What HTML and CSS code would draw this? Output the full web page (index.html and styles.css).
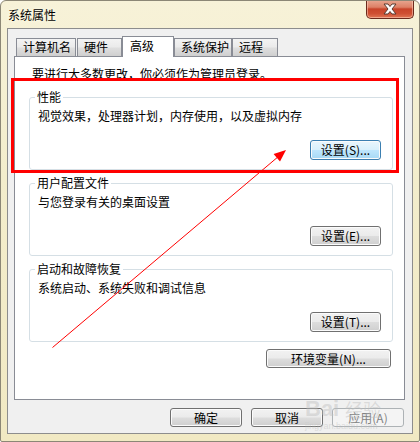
FILE: index.html
```html
<!DOCTYPE html>
<html lang="zh-CN">
<head>
<meta charset="utf-8">
<title>系统属性</title>
<link rel="stylesheet" href="styles.css">
</head>
<body>
<div class="window">
  <div class="titlebar">
    <span class="title">系统属性</span>
    <div class="close">
      <svg width="20" height="12" viewBox="0 0 20 12">
        <path d="M4 1 L8 1 L10 3.5 L12 1 L16 1 L12 6 L16 11 L12 11 L10 8.5 L8 11 L4 11 L8 6 Z" fill="#ffffff" stroke="#5a3a30" stroke-width="1"/>
      </svg>
    </div>
  </div>
  <div class="client">
    <div class="tabs">
      <div class="tab w60">计算机名</div>
      <div class="tab w45 gap1">硬件</div>
      <div class="tab tab-active w52">高级</div>
      <div class="tab w58">系统保护</div>
      <div class="tab w46">远程</div>
    </div>
    <div class="panel">
      <p class="intro">要进行大多数更改，你必须作为管理员登录。</p>
      <fieldset class="group">
        <legend>性能</legend>
        <p class="desc">视觉效果，处理器计划，内存使用，以及虚拟内存</p>
        <div class="group-actions"><button class="btn btn-hot">设置(S)...</button></div>
      </fieldset>
      <fieldset class="group">
        <legend>用户配置文件</legend>
        <p class="desc">与您登录有关的桌面设置</p>
        <div class="group-actions"><button class="btn">设置(E)...</button></div>
      </fieldset>
      <fieldset class="group">
        <legend>启动和故障恢复</legend>
        <p class="desc">系统启动、系统失败和调试信息</p>
        <div class="group-actions"><button class="btn">设置(T)...</button></div>
      </fieldset>
      <div class="env-row"><button class="btn btn-env">环境变量(N)...</button></div>
    </div>
    <div class="footer">
      <button class="btn btn-foot">确定</button>
      <button class="btn btn-foot">取消</button>
      <button class="btn btn-foot btn-disabled">应用(A)</button>
    </div>
  </div>

  <div class="highlight"></div>
  <svg class="arrow" width="420" height="442" viewBox="0 0 420 442">
    <line x1="52.5" y1="347.5" x2="279" y2="156" stroke="#ff0000" stroke-width="1"/>
    <polygon points="286,150 280,161.5 273.6,153.9" fill="#ff0000"/>
  </svg>
  <div class="watermark"><span class="wm-big">Bai</span><span class="wm-cn">经验</span><span class="wm-small">jingyan.baidu.com</span></div>
</div>
</body>
</html>
```

FILE: styles.css
```css
* { box-sizing: border-box; }

html, body {
  margin: 0;
  padding: 0;
  background: #ffffff;
}

body {
  font-family: "Noto Sans CJK SC", "Liberation Sans", sans-serif;
  font-size: 12px;
  line-height: 16px;
  color: #000;
}

.window {
  position: relative;
  width: 420px;
  height: 442px;
  background: linear-gradient(180deg, #f7f2d8 0%, #f3edcc 40%, #f1e9c3 100%);
  border: 1px solid #8c8776;
  border-radius: 6px 6px 2px 2px;
  overflow: hidden;
}

.titlebar {
  height: 27px;
  display: flex;
  align-items: flex-start;
  justify-content: space-between;
}

.title {
  margin: 6px 0 0 7px;
  font-size: 12px;
  line-height: 16px;
  color: #000;
  text-shadow: 0 0 6px #fffbe8, 0 0 3px #fffbe8;
}

.close {
  width: 48px;
  height: 19px;
  margin: -1px 5px 0 0;
  border: 1px solid #6b2a1d;
  border-top: none;
  border-radius: 0 0 5px 5px;
  background: linear-gradient(180deg, #e9a892 0%, #dd8066 40%, #c8442a 50%, #cf4f33 75%, #e07654 100%);
  box-shadow: inset 0 0 0 1px rgba(255, 210, 190, 0.55);
  display: flex;
  align-items: center;
  justify-content: center;
}

.client {
  margin: 0 6px;
  height: 406px;
  border: 1px solid #8d8d8d;
  background: #f0f0f0;
  display: flex;
  flex-direction: column;
}

.tabs {
  height: 27px;
  padding-left: 8px;
  display: flex;
  align-items: flex-end;
  position: relative;
  z-index: 1;
}

.tab {
  height: 18px;
  padding-left: 6px;
  border: 1px solid #898c95;
  border-bottom: none;
  background: linear-gradient(180deg, #f3f3f3 0%, #ebebeb 45%, #dedede 55%, #cfcfcf 100%);
  font-size: 12px;
  line-height: 16px;
  white-space: nowrap;
  color: #000;
}

.tab-active {
  height: 21px;
  margin-bottom: -1px;
  padding-left: 7px;
  padding-top: 1px;
  background: #ffffff;
}

.w60 { width: 60px; }
.w45 { width: 45px; }
.w52 { width: 52px; }
.w58 { width: 58px; }
.w46 { width: 46px; }
.gap1 { margin-left: 1px; }

.panel {
  margin-left: 6px;
  width: 391px;
  height: 344px;
  border: 1px solid #898c95;
  background: #ffffff;
  padding-top: 9px;
}

.intro {
  margin: 0 0 7px 17px;
  white-space: nowrap;
}

.group {
  margin: 0 0 5px 14px;
  width: 364px;
  min-width: 0;
  padding: 3px 11px 9px 8px;
  border: 1px solid #d5dfe5;
  border-radius: 3px;
}

.group legend {
  margin-left: -3px;
  padding: 0 2px;
  line-height: 16px;
  font-size: 12px;
}

.desc {
  margin: 0;
  white-space: nowrap;
}

.group-actions {
  margin-top: 16px;
  display: flex;
  justify-content: flex-end;
}

.btn {
  height: 20px;
  width: 71px;
  padding: 0;
  border: 1px solid #707070;
  border-radius: 3px;
  background: linear-gradient(180deg, #f2f2f2 0%, #ebebeb 48%, #dddddd 52%, #cfcfcf 100%);
  box-shadow: inset 0 0 0 1px #fbfbfb;
  font-family: "Noto Sans CJK SC", "Liberation Sans", sans-serif;
  font-size: 12px;
  line-height: 16px;
  color: #000;
  white-space: nowrap;
}

.btn-hot {
  border-color: #3c7fb1;
  background: linear-gradient(180deg, #eaf6fd 0%, #d9f0fc 48%, #bee6fd 52%, #a7d9f5 100%);
}

.env-row {
  margin: 7px 13px 0 0;
  display: flex;
  justify-content: flex-end;
}

.btn-env {
  width: 125px;
  height: 19px;
}

.footer {
  margin-top: 8px;
  padding-right: 8px;
  display: flex;
  justify-content: flex-end;
  gap: 9px;
}

.btn-foot {
  width: 72px;
  height: 19px;
}

.btn-disabled {
  border-color: #adb2b5;
  background: #f4f4f4;
  box-shadow: none;
  color: #838383;
}

.highlight {
  position: absolute;
  left: 10px;
  top: 77px;
  width: 388px;
  height: 95px;
  border: 3px solid #ff0000;
  pointer-events: none;
}

.arrow {
  position: absolute;
  left: -1px;
  top: -1px;
  pointer-events: none;
}

.watermark {
  position: absolute;
  left: 300px;
  top: 394px;
  width: 110px;
  height: 40px;
  pointer-events: none;
  font-family: "Liberation Sans", sans-serif;
  color: rgba(190, 190, 190, 0.45);
}

.wm-big {
  position: absolute;
  left: 4px;
  top: 2px;
  font-size: 22px;
  line-height: 24px;
  font-weight: bold;
}

.wm-cn {
  position: absolute;
  left: 44px;
  top: 4px;
  font-family: "Noto Sans CJK SC", sans-serif;
  font-size: 18px;
  line-height: 20px;
}

.wm-small {
  position: absolute;
  left: 4px;
  top: 26px;
  font-size: 9px;
  line-height: 10px;
}
```
